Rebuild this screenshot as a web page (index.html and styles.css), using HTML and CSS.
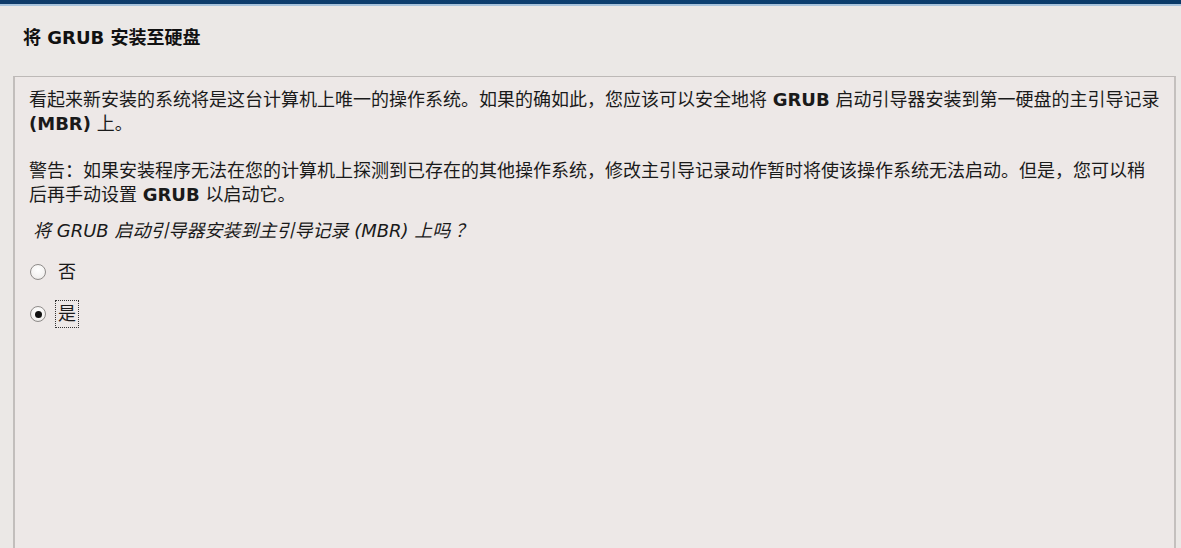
FILE: index.html
```html
<!DOCTYPE html>
<html lang="zh-CN">
<head>
<meta charset="utf-8">
<title>将 GRUB 安装至硬盘</title>
<link rel="stylesheet" href="styles.css">
</head>
<body>
<div class="topbar"></div>
<div class="page">
  <h1 class="title">将 GRUB 安装至硬盘</h1>
  <div class="panel">
    <p class="para first">看起来新安装的系统将是这台计算机上唯一的操作系统。如果的确如此，您应该可以安全地将 <b>GRUB</b> 启动引导器安装到第一硬盘的主引导记录<br><b>(MBR)</b> 上。</p>
    <p class="para second">警告：如果安装程序无法在您的计算机上探测到已存在的其他操作系统，修改主引导记录动作暂时将使该操作系统无法启动。但是，您可以稍<br>后再手动设置 <b>GRUB</b> 以启动它。</p>
    <p class="question">将 GRUB 启动引导器安装到主引导记录 (MBR) 上吗<span class="qmark">？</span></p>
    <div class="options">
      <div class="option"><span class="radio"></span><span class="label">否</span></div>
      <div class="option"><span class="radio checked"></span><span class="label focus">是</span></div>
    </div>
  </div>
</div>
</body>
</html>
```

FILE: styles.css
```css
html, body {
  margin: 0;
  padding: 0;
  height: 100%;
  overflow: hidden;
}
body {
  background: #ebe8e6;
  font-family: "DejaVu Sans", "Noto Sans CJK SC", sans-serif;
  font-size: 18px;
  color: #1a1a1a;
}
.qmark {
  font-family: "Noto Sans CJK SC", sans-serif;
  padding-left: 5px;
}
.topbar {
  height: 4px;
  background: linear-gradient(to right, #0e3b69, #0c3f70 60%, #0a3a68);
  border-bottom: 2px solid #a8c3dc;
}
.page {
  display: flex;
  flex-direction: column;
  height: 100%;
}
.title {
  margin: 20px 0 0 23px;
  font-size: 18px;
  line-height: 24px;
  font-weight: bold;
  color: #111;
}
.panel {
  margin: 26px 5px 0 13px;
  flex: 1;
  background: #ede8e7;
  border: 1px solid #bdb9b7;
  border-left: 2px solid #c2bebc;
  border-right: 2px solid #c4c0be;
  padding: 11px 0 0 14px;
}
.para {
  margin: 0;
  line-height: 24px;
  white-space: nowrap;
}
.para b {
  font-weight: bold;
}
.second {
  margin-top: 23px;
}
.question {
  margin: 10px 0 0 4px;
  line-height: 24px;
  font-style: italic;
}
.options {
  margin-top: 16px;
  display: flex;
  flex-direction: column;
  gap: 17px;
}
.option {
  display: flex;
  align-items: center;
  height: 25px;
}
.radio {
  width: 14px;
  height: 14px;
  border: 1px solid #8f8c8a;
  border-radius: 50%;
  background: radial-gradient(circle at 50% 35%, #ffffff, #f3f1f0 65%, #dcd9d7);
  margin-left: 1px;
  position: relative;
  box-sizing: content-box;
}
.radio.checked::after {
  content: "";
  position: absolute;
  left: 4px;
  top: 4px;
  width: 7px;
  height: 7px;
  border-radius: 50%;
  background: #111;
}
.label {
  margin-left: 9px;
  padding: 1px 2px;
  border: 1px dotted transparent;
  line-height: 24px;
}
.label.focus {
  border: 1px dotted #333;
}
```
